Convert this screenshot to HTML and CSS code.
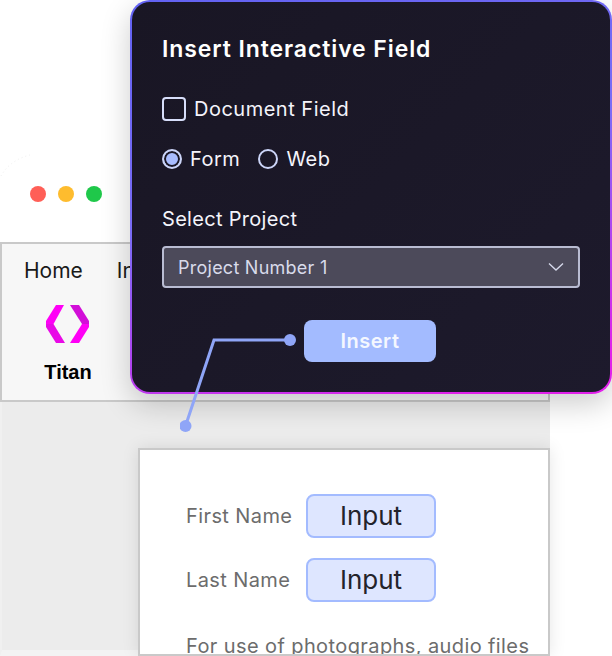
FILE: index.html
```html
<!DOCTYPE html>
<html lang="en">
<head>
    <meta charset="UTF-8">
    <meta name="viewport" content="width=device-width, initial-scale=1.0">
    <title>Insert Interactive Field</title>
    <link rel="stylesheet" href="styles.css">
</head>
<body>
    <div class="scene">
        <!-- Faint arc behind the window -->
        <svg class="arc" width="34" height="34" viewBox="0 0 34 34">
            <path d="M1 24Q10 8 30 3" fill="none" stroke="#efefef" stroke-width="1" stroke-dasharray="1 3"/>
        </svg>

        <!-- Window controls -->
        <div class="traffic">
            <span class="dot dot-red"></span>
            <span class="dot dot-yellow"></span>
            <span class="dot dot-green"></span>
        </div>

        <!-- Word processor window -->
        <div class="doc-window">
            <div class="ribbon">
                <div class="tabs">
                    <span>Home</span>
                    <span>Insert</span>
                </div>
                <div class="titan">
                    <svg class="titan-logo" width="44" height="38" viewBox="0 0 44 38">
                        <path d="M10 0H18L7.500 19H0V16Z" fill="#ff00f6"/>
                        <path d="M0 19H7.500L19 38H10L0 22Z" fill="#e80ae6"/>
                        <path d="M24 0H33L43 16V19H36Z" fill="#d20ed8"/>
                        <path d="M36 19H43V22L33 38H24Z" fill="#ff00f6"/>
                    </svg>
                    <span class="titan-label">Titan</span>
                </div>
            </div>
        </div>

        <!-- Form preview -->
        <div class="form-card">
            <div class="form-row">
                <span class="form-label">First Name</span>
                <span class="form-input">Input</span>
            </div>
            <div class="form-row">
                <span class="form-label">Last Name</span>
                <span class="form-input">Input</span>
            </div>
            <p class="form-note">For use of photographs, audio files</p>
        </div>

        <!-- Dialog -->
        <div class="dialog">
            <div class="dialog-inner">
                <h1>Insert Interactive Field</h1>
                <label class="check-row">
                    <span class="checkbox"></span>
                    <span>Document Field</span>
                </label>
                <div class="radio-row">
                    <span class="radio radio-on"></span>
                    <span class="radio-text">Form</span>
                    <span class="radio"></span>
                    <span>Web</span>
                </div>
                <div class="select-label">Select Project</div>
                <div class="select">
                    <span>Project Number 1</span>
                    <svg width="16" height="10" viewBox="0 0 16 10">
                        <path d="M1 1.500L8 8L15 1.500" fill="none" stroke="#d5d8ea" stroke-width="1.400"/>
                    </svg>
                </div>
                <div class="button-row">
                    <span class="insert-btn">Insert</span>
                </div>
            </div>
        </div>

        <!-- Connector from button to document -->
        <svg class="connector" width="120" height="110" viewBox="0 0 120 110">
            <path d="M5.500 96L34 10H110" fill="none" stroke="#8fa5f7" stroke-width="3"/>
            <circle cx="5.500" cy="96" r="6" fill="#8fa5f7"/>
            <circle cx="110" cy="10" r="6" fill="#8fa5f7"/>
        </svg>
    </div>
</body>
</html>
```
FILE: styles.css
```css
/* General styles */
body {
    margin: 0;
    background: #ffffff;
    font-family: Inter, "Open Sans", sans-serif;
}

.scene {
    position: relative;
    width: 612px;
    height: 656px;
    overflow: hidden;
}

.arc {
    position: absolute;
    left: 0;
    top: 152px;
}

/* Window controls */
.traffic {
    position: absolute;
    left: 30px;
    top: 186px;
    display: flex;
    gap: 12px;
}

.dot {
    width: 16px;
    height: 16px;
    border-radius: 50%;
}

.dot-red { background: #ff5f57; }
.dot-yellow { background: #febc2e; }
.dot-green { background: #1fc84a; }

/* Word processor window */
.doc-window {
    position: absolute;
    left: 0;
    top: 242px;
    width: 550px;
    height: 414px;
    box-sizing: border-box;
    border-left: 2px solid #f0f0f0;
    border-bottom: 6px solid #f3f3f3;
    background: #ececec;
}

.ribbon {
    height: 160px;
    margin-left: -2px;
    box-sizing: border-box;
    border: 2px solid #c9c9c9;
    background: #f7f7f7;
}

.tabs {
    display: flex;
    gap: 34px;
    padding: 14px 0 0 22px;
    font-size: 21px;
    line-height: 26px;
    color: #1a1a1a;
}

.titan {
    display: flex;
    flex-direction: column;
    align-items: center;
    width: 88px;
    margin: 21px 0 0 22px;
}

.titan-logo {
    display: block;
}

.titan-label {
    margin-top: 17px;
    font-family: "Liberation Sans", Arial, sans-serif;
    font-size: 20px;
    font-weight: 700;
    line-height: 24px;
    color: #000000;
}

/* Form preview */
.form-card {
    position: absolute;
    left: 138px;
    top: 448px;
    width: 412px;
    height: 208px;
    box-sizing: border-box;
    padding: 44px 0 0 46px;
    overflow: hidden;
    border: 2px solid #c9c9c9;
    background: #ffffff;
    box-shadow: 0 0 16px rgba(0, 0, 0, 0.1);
}

.form-row {
    display: flex;
    align-items: center;
    height: 44px;
    margin-bottom: 20px;
}

.form-label {
    width: 120px;
    font-size: 20px;
    letter-spacing: 0.4px;
    color: #6c6c6c;
}

.form-input {
    width: 130px;
    height: 44px;
    box-sizing: border-box;
    border: 2px solid #a3bbff;
    border-radius: 8px;
    background: #dee6ff;
    font-size: 26px;
    line-height: 40px;
    text-align: center;
    color: #23232b;
}

.form-note {
    margin: 30px 0 0;
    font-size: 20px;
    letter-spacing: 0.4px;
    line-height: 28px;
    white-space: nowrap;
    color: #6c6c6c;
}

/* Dialog */
.dialog {
    position: absolute;
    left: 130px;
    top: 0;
    width: 482px;
    height: 394px;
    box-sizing: border-box;
    padding: 2px;
    border-radius: 20px;
    background: linear-gradient(165deg, #6262f2 0%, #7a6cf5 45%, #e020ea 92%);
    box-shadow: 0 10px 30px rgba(0, 0, 0, 0.2);
}

.dialog-inner {
    height: 100%;
    box-sizing: border-box;
    padding: 32px 30px 0;
    border-radius: 18px;
    background: linear-gradient(135deg, #191624, #1d1a2c);
    color: #f4f4fb;
    font-size: 20px;
    letter-spacing: 0.5px;
}

.dialog h1 {
    margin: 0;
    font-size: 23px;
    font-weight: 600;
    letter-spacing: 0.9px;
    line-height: 30px;
    color: #ffffff;
}

.check-row {
    display: flex;
    align-items: center;
    gap: 8px;
    margin-top: 33px;
    height: 24px;
}

.checkbox {
    width: 24px;
    height: 24px;
    box-sizing: border-box;
    border: 2px solid #d7defa;
    border-radius: 4px;
}

.radio-row {
    display: flex;
    align-items: center;
    gap: 8px;
    margin-top: 26px;
    height: 24px;
}

.radio {
    width: 20px;
    height: 20px;
    box-sizing: border-box;
    border: 2px solid #ccd5f8;
    border-radius: 50%;
}

.radio-on {
    background: #a8bcff;
    box-shadow: inset 0 0 0 2px #1a1726;
}

.radio-text {
    margin-right: 10px;
}

.select-label {
    margin-top: 34px;
    line-height: 28px;
    letter-spacing: 0.3px;
}

.select {
    display: flex;
    align-items: center;
    justify-content: space-between;
    height: 42px;
    margin-top: 13px;
    box-sizing: border-box;
    padding: 0 14px;
    border: 2px solid #b9bcd2;
    border-radius: 4px;
    background: #4c4a5a;
    font-size: 18px;
    letter-spacing: 0.25px;
    color: #d9dbea;
}

.button-row {
    display: flex;
    justify-content: center;
    margin-top: 32px;
    padding-right: 2px;
}

.insert-btn {
    width: 132px;
    height: 42px;
    border-radius: 8px;
    background: #a3bbff;
    font-size: 20px;
    font-weight: 600;
    line-height: 43px;
    text-align: center;
    color: #f4f7ff;
}

/* Connector */
.connector {
    position: absolute;
    left: 180px;
    top: 330px;
}
```
